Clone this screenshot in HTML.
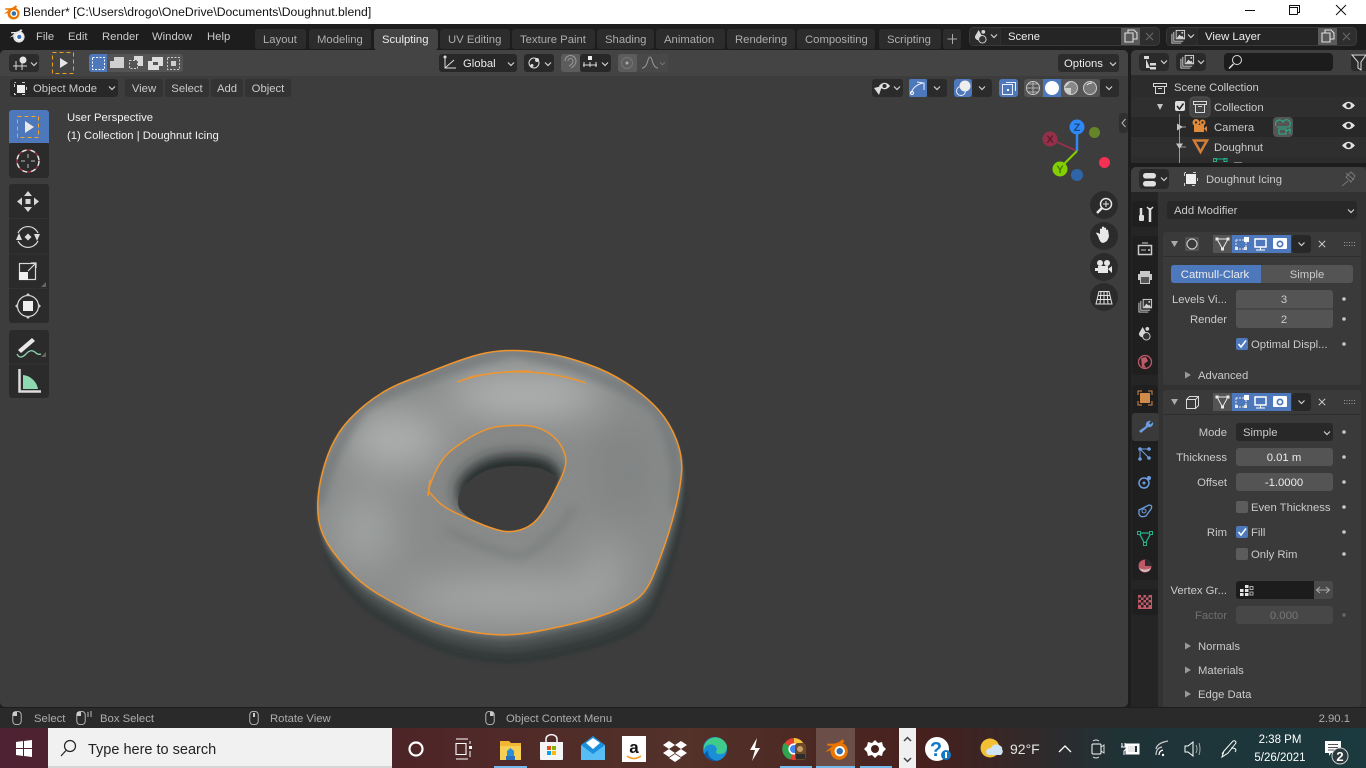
<!DOCTYPE html>
<html lang="en"><head><meta charset="utf-8"><title>Blender</title>
<style>
html,body{margin:0;padding:0;width:1366px;height:768px;overflow:hidden;background:#3d3d3d}
svg{display:block}
text{font-family:"Liberation Sans",sans-serif;font-size:11.300px;fill:#cacaca}
.w{fill:#ececec}.d{fill:#adadad}.g{fill:#6f6f6f}.r{text-anchor:end}.m{text-anchor:middle}
.s{font-family:"Liberation Sans",sans-serif}
.i{fill:none;stroke:#d8d8d8;stroke-width:1.2}
.f{fill:#d8d8d8}
</style></head><body>
<svg width="1366" height="768" viewBox="0 0 1366 768" xmlns="http://www.w3.org/2000/svg">
<defs>
<symbol id="ch" viewBox="0 0 8 6" overflow="visible"><path d="M1 1.5L4 4.5L7 1.5" fill="none" stroke="#d0d0d0" stroke-width="1.2"/></symbol>
<symbol id="eye" viewBox="0 0 14 10" overflow="visible"><path d="M1 5Q7 -2 13 5Q7 12 1 5Z" fill="#e2e2e2"/><circle cx="7" cy="5" r="2.2" fill="#2b2b2b"/></symbol>
<symbol id="bl" viewBox="0 0 24 24" overflow="visible"><path d="M1 15L8 9H3V7H12L17 3L19 5L12 11Z" fill="currentColor"/><circle cx="14" cy="14" r="8" fill="currentColor"/><circle cx="14.500" cy="14" r="4.800" fill="#fff"/><circle cx="14.500" cy="14" r="3" fill="#2f6fb0"/></symbol>
<symbol id="copy" viewBox="0 0 14 14" overflow="visible"><path d="M1 4H9V13H1ZM4 4V1H10L13 4V10H9" fill="none" stroke="#ddd" stroke-width="1.100"/></symbol>
<symbol id="x" viewBox="0 0 10 10" overflow="visible"><path d="M1 1L9 9M9 1L1 9" stroke="#d2d2d2" stroke-width="1.200" fill="none"/></symbol>
<symbol id="scene" viewBox="0 0 16 16" overflow="visible"><path d="M6 1L10 8A4 4 0 0 1 2 8Z" fill="#d6d6d6"/><circle cx="11" cy="3" r="2" fill="#d6d6d6"/><circle cx="10" cy="11" r="4" fill="#333" stroke="#d6d6d6"/></symbol>
<symbol id="layers" viewBox="0 0 16 16" overflow="visible"><path d="M1 5V15H11M3 3V13H13" fill="none" stroke="#d6d6d6"/><rect x="5.500" y="1.500" width="9" height="9" fill="#333" stroke="#d6d6d6"/><path d="M6 10L9 6L11 8L12 7L14 10Z" fill="#d6d6d6"/><circle cx="12" cy="4" r="1" fill="#d6d6d6"/></symbol>
<symbol id="verts" viewBox="0 0 78 18" overflow="visible"><rect width="19" height="18" fill="#545454"/><rect x="19" width="59" height="18" fill="#4d78bb"/>
<path d="M4 4H15L9.500 14Z" fill="none" stroke="#e8e8e8"/><g fill="#e8e8e8"><rect x="2.500" y="2.500" width="3" height="3"/><rect x="13.500" y="2.500" width="3" height="3"/><rect x="8" y="12.500" width="3" height="3"/></g>
<rect x="23" y="5" width="10" height="9" fill="none" stroke="#e8e8e8" stroke-dasharray="2 1"/><rect x="31" y="2" width="5" height="5" fill="#fff"/><rect x="22" y="12" width="3" height="3" fill="#e8e8e8"/><rect x="31" y="12" width="3" height="3" fill="#e8e8e8"/>
<rect x="42" y="4" width="11" height="8" fill="none" stroke="#fff" stroke-width="1.500"/><path d="M47.500 12V15M43 15H52" stroke="#fff"/>
<rect x="60" y="3" width="14" height="11" rx="1" fill="#fff"/><circle cx="67" cy="9" r="3.500" fill="#4d78bb"/><circle cx="67" cy="9" r="1.800" fill="#fff"/></symbol>
<symbol id="mouse" viewBox="0 0 10 15" overflow="visible"><rect x=".5" y=".5" width="9" height="14" rx="3.500" fill="none" stroke="#bdbdbd"/></symbol>
<path id="o" d="M318.5 493.5Q320 480 325 463.5Q330 447 338.5 433.5Q347 420 365 405Q383 390 405 381.5Q427 373 443.5 366.5Q460 360 473.5 356Q487 352 500 351Q513 350 526.5 351Q540 352 553.5 354.5Q567 357 588.5 364.5Q610 372 628.5 384.5Q647 397 658.5 410Q670 423 676.5 440Q683 457 681.5 473.5Q680 490 675 510Q670 530 663.5 548.5Q657 567 652 578.5Q647 590 640 596.5Q633 603 616.5 610Q600 617 580 622Q560 627 536.5 631.5Q513 636 493 634.5Q473 633 453 628Q433 623 413 613Q393 603 376.5 593Q360 583 346.5 568Q333 553 326.5 541.5Q320 530 318.5 518.5Q317 507 318.5 493.5Z"/>
<path id="h" d="M432.5 478.5Q437 467 443.5 458.5Q450 450 467.5 439Q485 428 499 426.5Q513 425 525 425.5Q537 426 547 432Q557 438 561.5 446.5Q566 455 566 461Q566 467 561.5 477Q557 487 550 500Q543 513 536.5 520Q530 527 520 530Q510 533 500 530.5Q490 528 478.5 523Q467 518 455 512.5Q443 507 436.5 500Q430 493 429 491.5Q428 490 432.5 478.5Z"/>
<path id="t" d="M458 503Q458 490 467 483Q477 474 487 470Q500 466 513 466Q527 466 540 468Q550 472 558 478L550 500Q543 513 536.500 520Q530 527 520 530Q510 533 500 530.500Q490 528 478.500 523Q468 518 462 512Q458 508 458 503Z"/>
<clipPath id="top"><use href="#o"/></clipPath>
<clipPath id="hole"><use href="#h"/></clipPath>
<filter id="b1" x="-5%" y="-5%" width="110%" height="110%"><feGaussianBlur stdDeviation="1.500"/></filter>
<filter id="b5" filterUnits="userSpaceOnUse" x="260" y="300" width="480" height="400"><feGaussianBlur stdDeviation="5"/></filter>
<filter id="b7" filterUnits="userSpaceOnUse" x="380" y="380" width="240" height="200"><feGaussianBlur stdDeviation="8"/></filter>
<filter id="b18" filterUnits="userSpaceOnUse" x="220" y="260" width="560" height="480"><feGaussianBlur stdDeviation="20"/></filter>
<linearGradient id="tb" x1="0" y1="0" x2="1366" y2="0" gradientUnits="userSpaceOnUse"><stop offset="0" stop-color="#4e2232"/><stop offset=".3" stop-color="#4e2527"/><stop offset=".5" stop-color="#53322a"/><stop offset=".68" stop-color="#46201d"/><stop offset=".82" stop-color="#1f3236"/><stop offset="1" stop-color="#1b3a3f"/></linearGradient>
</defs>

<!-- title bar -->
<rect width="1366" height="24" fill="#fff"/>
<use href="#bl" x="3" y="3" width="18" height="18" color="#ea7600"/>
<text class="s" x="23" y="16" style="font-size:12.200px;fill:#111">Blender* [C:\Users\drogo\OneDrive\Documents\Doughnut.blend]</text>
<path d="M1245 10.500H1255" stroke="#111"/><path d="M1290.500 7.500H1298.500V14.500M1290.500 7.500V5.500H1300.500V12.500H1298.500M1290.500 7.500V14.500H1298.500" fill="none" stroke="#111" transform="translate(-1 0)"/><path d="M1336 5L1346 15M1346 5L1336 15" stroke="#111" fill="none"/>

<!-- top bar -->
<rect y="24" width="1366" height="684" fill="#1d1d1d"/>
<use href="#bl" x="9" y="27" width="17" height="17" color="#e6e6e6"/>
<text x="36" y="40" >File</text><text x="68" y="40">Edit</text><text x="102" y="40">Render</text><text x="152" y="40">Window</text><text x="207" y="40">Help</text>
<g fill="#2c2c2c"><rect x="255" y="29" width="51" height="20" rx="3"/><rect x="309" y="29" width="62" height="20" rx="3"/><rect x="440" y="29" width="70" height="20" rx="3"/><rect x="512" y="29" width="83" height="20" rx="3"/><rect x="597" y="29" width="57" height="20" rx="3"/><rect x="656" y="29" width="69" height="20" rx="3"/><rect x="727" y="29" width="68" height="20" rx="3"/><rect x="797" y="29" width="78" height="20" rx="3"/><rect x="879" y="29" width="62" height="20" rx="3"/><rect x="943" y="29" width="18" height="20" rx="3"/></g>
<rect x="374" y="29" width="64" height="21" rx="3" fill="#444"/>
<text class="d" x="263" y="43">Layout</text><text class="d" x="317" y="43">Modeling</text><text class="w" x="382" y="43">Sculpting</text><text class="d" x="448" y="43">UV Editing</text><text class="d" x="520" y="43">Texture Paint</text><text class="d" x="605" y="43">Shading</text><text class="d" x="664" y="43">Animation</text><text class="d" x="735" y="43">Rendering</text><text class="d" x="805" y="43">Compositing</text><text class="d" x="887" y="43">Scripting</text>
<path d="M947.500 39H957M952.500 34V44" stroke="#aaa"/>

<!-- scene/view layer -->
<rect x="969.500" y="27.500" width="190" height="18" rx="4" fill="#2e2e2e" stroke="#3a3a3a"/><rect x="970" y="28" width="30" height="17" rx="3" fill="#2a2a2a"/><rect x="1001" y="28" width="120" height="17" fill="#252525"/><rect x="1121" y="28" width="19" height="17" fill="#5a5a5a"/>
<use href="#scene" x="973" y="29" width="15" height="15"/><use href="#ch" x="990" y="33" width="8" height="6"/>
<text class="w" x="1008" y="40">Scene</text><use href="#copy" x="1124" y="29" width="14" height="14"/><use href="#x" x="1145" y="32" width="9" height="9" opacity=".35"/>
<rect x="1166.500" y="27.500" width="190" height="18" rx="4" fill="#2e2e2e" stroke="#3a3a3a"/><rect x="1167" y="28" width="30" height="17" rx="3" fill="#2a2a2a"/><rect x="1198" y="28" width="120" height="17" fill="#252525"/><rect x="1318" y="28" width="19" height="17" fill="#5a5a5a"/>
<use href="#layers" x="1171" y="29" width="15" height="15"/><use href="#ch" x="1187" y="33" width="8" height="6"/>
<text class="w" x="1205" y="40">View Layer</text><use href="#copy" x="1321" y="29" width="14" height="14"/><use href="#x" x="1342" y="32" width="9" height="9" opacity=".35"/>

<!-- 3D viewport -->
<rect x="0" y="50" width="1128" height="657" rx="5" fill="#3d3d3d"/>
<path d="M0 76V55a5 5 0 0 1 5-5H1123a5 5 0 0 1 5 5V76Z" fill="#444"/>

<!-- row 1 -->
<rect x="9" y="54" width="30" height="18" rx="3" fill="#2c2c2c"/><path d="M13 66H27M16 61V70M22 61V70" stroke="#d8d8d8" fill="none"/><circle cx="23" cy="60" r="3.500" fill="#e4e4e4"/><use href="#ch" x="30" y="61" width="8" height="6"/>
<rect x="52.500" y="52.500" width="21" height="21" fill="none" stroke="#f0a020" stroke-dasharray="4 3"/><path d="M60 58L68 63L60 68Z" fill="#e6e6e6"/>
<rect x="89" y="54" width="94" height="18" rx="3" fill="#545454"/><path d="M107 54H92a3 3 0 0 0-3 3V69a3 3 0 0 0 3 3H107Z" fill="#4d78bb"/>
<rect x="92.500" y="57.500" width="12" height="12" fill="none" stroke="#fff" stroke-dasharray="2 1.500"/>
<path d="M110 61H114V57H124V68H110Z" fill="#d0d0d0"/>
<rect x="129.500" y="60.500" width="8" height="8" fill="none" stroke="#d0d0d0" stroke-dasharray="2 1.500"/><path d="M134 56H143V66H138V60H134Z" fill="#d8d8d8"/>
<path d="M148 61H152V57H163V66H159V70H148ZM153 62V65H158V62Z" fill="#ddd" fill-rule="evenodd"/>
<rect x="167.500" y="57.500" width="12" height="12" fill="none" stroke="#ccc" stroke-dasharray="2 1.500"/><rect x="171" y="61" width="5" height="5" fill="#ccc"/>

<rect x="439" y="54" width="78" height="18" rx="3" fill="#282828"/><path d="M445 57V68H456M445 68L454 60" stroke="#ddd" fill="none"/><circle cx="445" cy="57" r="1.500" fill="#ddd"/>
<text class="w" x="463" y="67">Global</text><use href="#ch" x="507" y="61" width="8" height="6"/>
<rect x="524" y="54" width="30" height="18" rx="3" fill="#282828"/><circle cx="534" cy="63" r="5" fill="none" stroke="#ddd"/><circle cx="537" cy="60" r="2" fill="#ddd"/><circle cx="532" cy="65.500" r="1.500" fill="#ddd"/><use href="#ch" x="544" y="61" width="8" height="6"/>
<rect x="561" y="54" width="20" height="18" rx="3" fill="#5c5c5c"/><path d="M565 61A5.500 5.500 0 0 1 576 61Q576 65 571 68M568 61A2.500 2.500 0 0 1 573 61Q573 64 569 66" fill="none" stroke="#999"/>
<rect x="580" y="54" width="31" height="18" rx="3" fill="#282828"/><path d="M583 65H597M584 62V67M590 62V67M596 62V67" stroke="#ddd" fill="none"/><rect x="588" y="56" width="4" height="4" fill="#eee"/><use href="#ch" x="601" y="61" width="8" height="6"/>
<rect x="618" y="54" width="20" height="18" rx="3" fill="#5c5c5c"/><circle cx="627" cy="63" r="5.500" fill="none" stroke="#777"/><circle cx="627" cy="63" r="1.500" fill="#aaa"/>
<rect x="637" y="54" width="31" height="18" rx="3" fill="#484848"/><path d="M642 68Q646 68 648 60Q649 57 650 57Q651 57 652 60Q654 68 658 68" fill="none" stroke="#999"/><use href="#ch" x="659" y="61" width="7" height="5" opacity=".3"/>
<rect x="1058" y="54" width="61" height="18" rx="3" fill="#2c2c2c"/><text class="w" x="1064" y="67">Options</text><use href="#ch" x="1109" y="61" width="8" height="6"/>

<!-- row 2 -->
<rect x="10" y="79" width="108" height="18" rx="3" fill="#282828"/>
<rect x="14.500" y="82.500" width="12" height="12" fill="none" stroke="#ccc" stroke-dasharray="3 6" stroke-dashoffset="1.500"/><rect x="17" y="85" width="8" height="8" fill="#eee"/>
<text x="33" y="92">Object Mode</text><use href="#ch" x="108" y="85" width="8" height="6"/>
<g fill="#333"><rect x="125" y="79" width="38" height="18" rx="3"/><rect x="165" y="79" width="44" height="18" rx="3"/><rect x="211" y="79" width="32" height="18" rx="3"/><rect x="245" y="79" width="46" height="18" rx="3"/></g>
<text class="m" x="144" y="92">View</text><text class="m" x="187" y="92">Select</text><text class="m" x="227" y="92">Add</text><text class="m" x="268" y="92">Object</text>

<rect x="872" y="79" width="31" height="18" rx="3" fill="#2b2b2b"/><use href="#eye" x="878" y="81" width="13" height="10"/><path d="M874 88L882 86L879 95Z" fill="#ddd"/><use href="#ch" x="893" y="85" width="8" height="6"/>
<rect x="927" y="79" width="20" height="18" rx="3" fill="#2b2b2b"/><rect x="909" y="79" width="18" height="18" rx="2" fill="#4d78bb"/><path d="M911 93Q914 85 923 83M917 82L924 83V90" fill="none" stroke="#eef"/><circle cx="912" cy="93" r="1.500" fill="none" stroke="#fff"/><use href="#ch" x="933" y="85" width="8" height="6"/>
<rect x="972" y="79" width="20" height="18" rx="3" fill="#2b2b2b"/><rect x="954" y="79" width="18" height="18" rx="3" fill="#4d78bb"/><circle cx="965" cy="86" r="5.500" fill="#eee"/><circle cx="961" cy="91" r="4.500" fill="none" stroke="#eee"/><use href="#ch" x="978" y="85" width="8" height="6"/>
<rect x="999" y="79" width="19" height="18" rx="3" fill="#4d78bb"/><rect x="1002.500" y="84.500" width="10" height="10" fill="none" stroke="#eef"/><path d="M1006 82.500H1015.500V91" fill="none" stroke="#eef"/><rect x="1007" y="89" width="2" height="2" fill="#fff"/>
<rect x="1024" y="79" width="76" height="18" rx="3" fill="#545454"/><rect x="1043" y="79" width="18" height="18" fill="#4d78bb"/><rect x="1100" y="79" width="19" height="18" rx="3" fill="#2b2b2b"/>
<circle cx="1033" cy="88" r="6.500" fill="none" stroke="#c8c8c8"/><path d="M1027 88H1040M1033 81.500V94.500M1028 84H1038M1028 92H1038" stroke="#c8c8c8" fill="none" stroke-width=".8"/>
<circle cx="1052" cy="88" r="7" fill="#fff"/>
<circle cx="1071" cy="88" r="6.500" fill="#888" stroke="#ccc"/><path d="M1071 81.500A6.500 6.500 0 0 0 1071 94.500V88H1064.500Z" fill="#ccc"/>
<circle cx="1090" cy="88" r="6.500" fill="#777" stroke="#ccc"/><path d="M1087 85Q1089 83 1092 83" stroke="#eee" fill="none"/>
<use href="#ch" x="1105" y="85" width="8" height="6"/>

<!-- overlay text -->
<text class="w" x="67" y="121" style="fill:#f0f0f0">User Perspective</text>
<text class="w" x="67" y="139" style="fill:#f0f0f0">(1) Collection | Doughnut Icing</text>

<!-- toolbar -->
<rect x="9" y="143" width="40" height="35" rx="3" fill="#2b2b2b"/><path d="M9 143V113a3 3 0 0 1 3-3H46a3 3 0 0 1 3 3V143Z" fill="#4d78bb"/>
<rect x="17.500" y="116.500" width="21" height="21" fill="none" stroke="#f5a623" stroke-dasharray="4 3"/><path d="M25 121L34 127L25 133Z" fill="#e8e8e8"/>
<circle cx="28" cy="161" r="11" fill="none" stroke="#e6e6e6" stroke-width="1.500" stroke-dasharray="5 4"/><circle cx="28" cy="161" r="11" fill="none" stroke="#a03040" stroke-width="1.500" stroke-dasharray="4 5" stroke-dashoffset="-5"/><path d="M28 154V158M28 164V168M21 161H25M31 161H35" stroke="#bbb"/>
<rect x="9" y="184" width="40" height="139" rx="3" fill="#2b2b2b"/><path d="M9 218.500H49M9 254H49M9 288.500H49" stroke="#333"/>
<g class="f"><path d="M28 191L24 196H32ZM28 212L24 207H32ZM17 201.500L22 197.500V205.500ZM39 201.500L34 197.500V205.500Z"/><rect x="25.500" y="199" width="5" height="5"/></g>
<path d="M18 233A11 11 0 0 1 38 233M38 241A11 11 0 0 1 18 241" class="i"/><path d="M28 233.500L31.500 237L28 240.500L24.500 237Z" fill="#ddd"/><path d="M16 240L19 233L22 240ZM34 234L37 241L40 234Z" fill="#ddd"/>
<rect x="19.500" y="263.500" width="16" height="16" class="i"/><rect x="19" y="272" width="9" height="8" fill="#eee"/><path d="M28 271L36 263M31 263H36V268" class="i"/>
<circle cx="28" cy="306" r="10.500" class="i"/><rect x="23" y="301" width="10" height="10" fill="#eee"/><path d="M28 293L25 296H31ZM28 319L25 316H31ZM15 306L18 303V309ZM41 306L38 303V309Z" fill="#ccc"/>
<rect x="9" y="330" width="40" height="68" rx="3" fill="#2b2b2b"/><path d="M9 364H49" stroke="#333"/>
<path d="M32 338L18 350L21 353L35 341Z" fill="#e8e8e8"/><path d="M17 354Q20 360 26 354Q31 348 36 353Q38 355 41 354" fill="none" stroke="#8fd9b0" stroke-width="1.300"/>
<path d="M19.500 369V391.500H41" fill="none" stroke="#ddd" stroke-width="2.500"/><path d="M23 375A17 17 0 0 1 38 389H23Z" fill="#8fd9b0"/>
<path d="M46 352V357H41ZM46 282V287H41Z" fill="#666"/>

<!-- gizmo -->
<path d="M1077 151L1050 139" stroke="#94304a" stroke-width="2"/><path d="M1077 151V127" stroke="#2f88f5" stroke-width="2.500"/><path d="M1077 151L1059 169" stroke="#82d000" stroke-width="2"/>
<circle cx="1094.500" cy="132.500" r="5.500" fill="#658528"/><circle cx="1104.500" cy="162.500" r="5.500" fill="#f53052"/><circle cx="1077" cy="175" r="6" fill="#2e65a8"/>
<circle cx="1050" cy="139" r="7.500" fill="#94304a"/><circle cx="1077" cy="127" r="7.500" fill="#2f88f5"/><circle cx="1060" cy="169" r="7.500" fill="#82d000"/>
<text class="m" x="1050" y="143" style="font-size:11px;font-weight:bold;fill:#5a1e2c">X</text><text class="m" x="1077" y="131" style="font-size:11px;font-weight:bold;fill:#174a88">Z</text><text class="m" x="1060" y="173" style="font-size:11px;font-weight:bold;fill:#4a7a00">Y</text>
<!-- nav -->
<g fill="#2b2b2b"><circle cx="1104" cy="205" r="14"/><circle cx="1104" cy="236" r="14"/><circle cx="1104" cy="267" r="14"/><circle cx="1104" cy="297" r="14"/></g>
<circle cx="1106" cy="204" r="5.500" fill="none" stroke="#e6e6e6" stroke-width="1.500"/><path d="M1102 208L1097 213" stroke="#e6e6e6" stroke-width="2.500"/><path d="M1103 204H1109M1106 201V207" stroke="#e6e6e6"/>
<path d="M1098 236L1096 233Q1097 232 1100 234V229Q1101 228 1102 229V233V227Q1103 226 1104 227V233V228Q1105 227 1106 228V234V230Q1107 229 1108 230L1109 236Q1108 242 1103 243Q1100 243 1098 236Z" fill="#e8e8e8"/>
<circle cx="1100" cy="263" r="3" fill="#e6e6e6"/><circle cx="1107" cy="263" r="3" fill="#e6e6e6"/><rect x="1098" y="266" width="10" height="7" fill="#e6e6e6"/><path d="M1108 269L1112 266V273Z" fill="#e6e6e6"/><path d="M1095 268H1098V271H1095Z" fill="#e6e6e6"/>
<path d="M1099 291.500H1109L1112 304H1096ZM1104 291.500V304M1098 295.500H1110M1097 299.500H1111M1101 291.500L1100 304M1107 291.500L1108 304" fill="none" stroke="#e2e2e2"/>
<rect x="1119" y="113" width="9" height="20" rx="3" fill="#2f2f2f"/><path d="M1125.500 119L1122 123L1125.500 127" fill="none" stroke="#bbb"/>

<!-- donut -->
<g filter="url(#b1)">
<use href="#o" transform="translate(5 29)" fill="#323737"/>
<use href="#o" transform="translate(4 24)" fill="#363b3b"/>
<use href="#o" transform="translate(3 18)" fill="#3f4444"/>
<use href="#o" transform="translate(2 12)" fill="#4c5151"/>
<use href="#o" transform="translate(1 6)" fill="#5c6161"/>
<use href="#o" transform="translate(0 2)" fill="#6d7272"/>
</g>
<g clip-path="url(#top)">
<rect x="310" y="340" width="380" height="300" fill="#898b8b"/>
<g filter="url(#b18)">
<ellipse cx="525" cy="395" rx="80" ry="20" fill="#b8baba"/>
<ellipse cx="395" cy="440" rx="50" ry="30" fill="#aeb0b0"/>
<ellipse cx="365" cy="530" rx="30" ry="40" fill="#a0a3a3"/>
<ellipse cx="510" cy="598" rx="110" ry="16" fill="#aeb0b0"/>
<ellipse cx="605" cy="565" rx="22" ry="25" fill="#a0a2a2"/>
<ellipse cx="625" cy="470" rx="30" ry="50" fill="#828484"/>
</g>
<g filter="url(#b5)" fill="none">
<path d="M318 505Q330 447 365 405Q427 373 513 350Q610 372 658 410Q683 457 675 510" stroke="#707373" stroke-width="8"/>
<path d="M445 528Q490 552 520 556Q550 545 575 505" stroke="#797c7c" stroke-width="6"/>
</g>
</g>
<g clip-path="url(#hole)"><rect x="420" y="420" width="155" height="120" fill="#868888"/><use href="#t" transform="translate(0 -10)" fill="#1f2323" filter="url(#b7)"/><use href="#t" transform="translate(3 -4)" fill="#2c3030" filter="url(#b5)"/></g>
<use href="#t" fill="#3d3d3d"/>
<g fill="none" stroke="#f0952d" stroke-width="1.500" stroke-linejoin="round">
<use href="#o"/><use href="#h"/>
<path d="M428 496L430 480M457 382Q490 370 530 372Q560 374 586 383M470 377Q500 371 530 371"/>
</g>

<!-- outliner -->
<path d="M1131 163V55a5 5 0 0 1 5-5H1366V163Z" fill="#2c2c2c"/>
<path d="M1131 75V55a5 5 0 0 1 5-5H1366V75Z" fill="#3f3f3f"/>
<rect x="1139" y="53" width="30" height="18" rx="4" fill="#2a2a2a"/><path d="M1144 56H1149V59H1144ZM1146 59V68H1150M1150 63H1156V65.500H1150ZM1150 67H1156V69.500H1150Z" fill="#d8d8d8"/><use href="#ch" x="1160" y="59" width="8" height="6"/>
<rect x="1176" y="53" width="30" height="18" rx="4" fill="#2a2a2a"/><use href="#layers" x="1180" y="54" width="15" height="15"/><use href="#ch" x="1197" y="59" width="8" height="6"/>
<rect x="1224" y="53" width="109" height="18" rx="4" fill="#1c1c1c"/><circle cx="1237" cy="60" r="4.500" fill="none" stroke="#ddd"/><path d="M1233.500 64L1229 68.500" stroke="#ddd" stroke-width="1.500"/>
<path d="M1351 57a3 3 0 0 1 3-3H1366V71H1354a3 3 0 0 1-3-3Z" fill="#2a2a2a"/><path d="M1352 55H1366L1361 62V70L1358 68V62Z" fill="none" stroke="#ddd"/>
<rect x="1131" y="97" width="235" height="20" fill="#2f2f2f"/><rect x="1131" y="117" width="235" height="20" fill="#282828"/><rect x="1131" y="137" width="235" height="20" fill="#2f2f2f"/>
<path d="M1153.500 83.500H1166.500V86.500H1153.500ZM1155.500 86.500V93.500H1164.500V86.500M1158 88.500H1162" fill="none" stroke="#d8d8d8"/>
<text x="1174" y="91">Scene Collection</text>
<path d="M1157 104H1163L1160 110Z" fill="#c4c4c4"/><path d="M1179.500 114V163M1180 127H1186M1180 147H1186" stroke="#9a9a9a" fill="none"/>
<rect x="1175" y="101" width="10" height="10" rx="2" fill="#ddd"/><path d="M1177 106L1179.500 109L1183.500 103.500" fill="none" stroke="#222" stroke-width="1.500"/>
<rect x="1190" y="97" width="20" height="20" rx="4" fill="#444" stroke="#555"/><path d="M1193.500 101.500H1206.500V104.500H1193.500ZM1195.500 104.500V112.500H1204.500V104.500M1198 106.500H1202" fill="none" stroke="#d8d8d8"/>
<text x="1214" y="111">Collection</text><use href="#eye" x="1341" y="100" width="15" height="11"/>
<path d="M1177 123.500L1183 127L1177 130.500Z" fill="#c4c4c4"/>
<circle cx="1196" cy="122.500" r="3.500" fill="#e08a3c"/><circle cx="1202.500" cy="122.500" r="3" fill="#e08a3c"/><rect x="1194" y="125" width="10" height="7" fill="#e08a3c"/><path d="M1204 128.500L1207 126V132Z" fill="#e08a3c"/><circle cx="1196" cy="122.500" r="1.200" fill="#333"/><circle cx="1202.500" cy="122.500" r="1.200" fill="#333"/>
<text x="1214" y="131">Camera</text>
<rect x="1273" y="117" width="20" height="20" rx="4" fill="#555"/><path d="M1276 126A4 4 0 0 1 1283 122A3 3 0 0 1 1290 125Q1290 127 1288 127H1277M1279 129H1286V134H1279ZM1286 131L1290 129V134" fill="none" stroke="#25b08c" stroke-width="1.100"/>
<use href="#eye" x="1341" y="120" width="15" height="11"/>
<path d="M1176 143.500H1183L1179.500 149Z" fill="#c4c4c4"/><path d="M1194 140.500H1207L1200.500 152Z" fill="none" stroke="#d07f3a" stroke-width="2.500"/>
<text x="1214" y="151">Doughnut</text><use href="#eye" x="1341" y="140" width="15" height="11"/>
<path d="M1215 159H1226" stroke="#25b08c"/><rect x="1213.500" y="158.500" width="3" height="3" fill="none" stroke="#25b08c"/><rect x="1224" y="158.500" width="3" height="3" fill="none" stroke="#25b08c"/><path d="M1234 163H1242" stroke="#ccc"/>
<rect x="1131" y="163" width="235" height="4" fill="#1d1d1d"/>

<!-- properties -->
<path d="M1131 707V172a5 5 0 0 1 5-5H1366V707Z" fill="#323232"/>
<path d="M1131 192V172a5 5 0 0 1 5-5H1361a5 5 0 0 1 5 5V192Z" fill="#3f3f3f"/>
<rect x="1139" y="169" width="30" height="20" rx="4" fill="#2a2a2a"/><rect x="1143" y="173" width="13" height="5.500" rx="2.700" fill="#e0e0e0"/><rect x="1143" y="181" width="13" height="5.500" rx="2.700" fill="#e0e0e0"/><use href="#ch" x="1160" y="176" width="8" height="6"/>
<rect x="1184.500" y="172.500" width="13" height="13" fill="none" stroke="#ccc" stroke-dasharray="3 7" stroke-dashoffset="1.500"/><rect x="1186" y="174" width="10" height="10" fill="#eee"/>
<text x="1206" y="183">Doughnut Icing</text>
<path d="M1346 173L1354 180M1348 181L1342 186M1351 172L1355 176L1351 182L1346 177Z" fill="none" stroke="#777"/>

<!-- tabs column -->
<rect x="1131" y="192" width="27" height="515" fill="#252525"/>
<g fill="#1f1f1f"><rect x="1132" y="201" width="26" height="26" rx="3"/><rect x="1132" y="236" width="26" height="139" rx="3"/><rect x="1132" y="385" width="26" height="195" rx="3"/><rect x="1132" y="589" width="26" height="26" rx="3"/></g>
<rect x="1132" y="413" width="27" height="28" rx="3" fill="#3a3a3a"/>
<!-- tab icons -->
<path d="M1141 208V215M1150 208V222" stroke="#ddd" stroke-width="2.500"/><path d="M1147 207L1150 210L1153 207" fill="none" stroke="#ddd" stroke-width="1.500"/><rect x="1139" y="215" width="5" height="6" rx="1" fill="#ddd"/>
<rect x="1138.500" y="245.500" width="13" height="9" fill="none" stroke="#ccc" stroke-width="1.500"/><path d="M1142 243H1148M1141 250H1146" stroke="#ccc"/><circle cx="1149" cy="250" r="1" fill="#ccc"/>
<path d="M1140 271H1150V274H1152V280H1150V284H1140V280H1138V274H1140Z" fill="#c8c8c8"/><rect x="1141" y="277" width="8" height="6" fill="#555"/>
<use href="#layers" x="1138" y="298" width="15" height="15"/>
<use href="#scene" x="1137" y="326" width="15" height="15"/>
<circle cx="1145" cy="362" r="6.500" fill="none" stroke="#c05a68" stroke-width="1.300"/><path d="M1141 358L1146 357L1148 361L1144 364L1146 368L1142 367Z" fill="#c05a68"/>
<rect x="1140" y="393" width="10" height="10" fill="#d08a4a"/><path d="M1138 395V391H1142M1148 391H1152V395M1152 401V405H1148M1142 405H1138V401" fill="none" stroke="#d08a4a"/>
<path d="M1151 421a4 4 0 0 0-5 5L1139 431L1141 433L1148 427a4 4 0 0 0 5-5L1150.500 424.500L1149 423Z" fill="#6b9de0"/>
<path d="M1140 449L1140 459M1140 449L1149 458M1140 449H1149" stroke="#6b9de0" fill="none"/><circle cx="1140" cy="449" r="1.800" fill="#6b9de0"/><circle cx="1140" cy="459" r="1.800" fill="#6b9de0"/><circle cx="1149" cy="458" r="1.800" fill="#6b9de0"/><circle cx="1149" cy="449" r="1.800" fill="#6b9de0"/>
<circle cx="1144" cy="483" r="5" fill="none" stroke="#6b9de0" stroke-width="1.500"/><circle cx="1144" cy="483" r="1.500" fill="#6b9de0"/><circle cx="1149" cy="478" r="2" fill="#6b9de0"/>
<path d="M1139 510L1149 505Q1153 505 1151 509L1146 516Q1140 518 1139 514Z" fill="none" stroke="#6b9de0" stroke-width="1.300"/><circle cx="1144" cy="511" r="2" fill="none" stroke="#6b9de0"/>
<path d="M1139 533H1151L1145 544Z" fill="none" stroke="#25b08c" stroke-width="1.300"/><g fill="#1f1f1f" stroke="#25b08c"><rect x="1137.500" y="531.500" width="3" height="3"/><rect x="1149.500" y="531.500" width="3" height="3"/><rect x="1143.500" y="542.500" width="3" height="3"/></g>
<circle cx="1145" cy="566" r="6.500" fill="#c05a68"/><path d="M1145 559.500A6.500 6.500 0 0 1 1151.500 566H1145Z" fill="#2b2b2b"/><path d="M1139 568Q1145 571 1151 568A6.500 6.500 0 0 1 1139 568Z" fill="#ddd" opacity=".7"/>
<rect x="1138" y="595" width="14" height="14" fill="#c05a68"/><path d="M1141 595H1143.500V597.500H1141ZM1146 595H1148.500V597.500H1146ZM1138.500 597.500H1141V600H1138.500ZM1143.500 597.500H1146V600H1143.500ZM1148.500 597.500H1151V600H1148.500ZM1141 600H1143.500V602.500H1141ZM1146 600H1148.500V602.500H1146ZM1138.500 602.500H1141V605H1138.500ZM1143.500 602.500H1146V605H1143.500ZM1148.500 602.500H1151V605H1148.500ZM1141 605H1143.500V607.500H1141ZM1146 605H1148.500V607.500H1146Z" fill="#222"/>

<!-- Add modifier -->
<rect x="1167" y="201" width="190" height="18" rx="3" fill="#282828"/><text x="1174" y="214">Add Modifier</text><use href="#ch" x="1347" y="208" width="8" height="6"/>

<!-- Panel 1 -->
<rect x="1163" y="232" width="198" height="153" rx="3" fill="#3a3a3a"/><path d="M1163 256.500H1361" stroke="#2e2e2e"/>
<path d="M1171 241H1178L1174.500 247Z" fill="#aaa"/>
<rect x="1186" y="238" width="12" height="12" fill="none" stroke="#666"/><circle cx="1192" cy="244" r="5" fill="none" stroke="#d8d8d8"/>
<use href="#verts" x="1213" y="235" width="78" height="18"/>
<rect x="1292" y="235" width="19" height="18" rx="3" fill="#282828"/><use href="#ch" x="1297" y="241" width="9" height="6"/><use href="#x" x="1318" y="240" width="8" height="8"/>
<path d="M1344 242.500H1356M1344 245.500H1356" stroke="#999" stroke-dasharray="1 1.500"/>
<rect x="1171" y="265" width="182" height="18" rx="3" fill="#545454"/><path d="M1261 265H1174a3 3 0 0 0-3 3V280a3 3 0 0 0 3 3H1261Z" fill="#4d78bb"/>
<text class="w m" x="1215" y="278">Catmull-Clark</text><text class="m" x="1307" y="278">Simple</text>
<text class="r" x="1227" y="303">Levels Vi...</text><text class="r" x="1227" y="323">Render</text>
<rect x="1236" y="290" width="97" height="38" rx="3" fill="#545454"/><path d="M1236 309H1333" stroke="#3a3a3a"/>
<text class="m" x="1284" y="303">3</text><text class="m" x="1284" y="323">2</text>
<rect x="1236" y="338" width="12" height="12" rx="2" fill="#4d78bb"/><path d="M1238.500 344L1241 347L1246 340.500" fill="none" stroke="#fff" stroke-width="1.500"/><text x="1251" y="348">Optimal Displ...</text>
<g fill="#c8c8c8"><circle cx="1344" cy="299" r="1.800"/><circle cx="1344" cy="319" r="1.800"/><circle cx="1344" cy="344" r="1.800"/></g>
<path d="M1185 371.500L1191 375L1185 378.500Z" fill="#999"/><text x="1198" y="379">Advanced</text>

<!-- Panel 2 -->
<path d="M1163 707V393a3 3 0 0 1 3-3H1358a3 3 0 0 1 3 3V703a4 4 0 0 1-4 4Z" fill="#3a3a3a"/><path d="M1163 414.500H1361" stroke="#2e2e2e"/>
<path d="M1171 399H1178L1174.500 405Z" fill="#aaa"/>
<path d="M1186.500 399.500H1195.500V408.500H1186.500ZM1186.500 399.500L1189.500 396.500H1198.500V405.500L1195.500 408.500M1195.500 399.500L1198.500 396.500" fill="none" stroke="#d8d8d8"/>
<use href="#verts" x="1213" y="393" width="78" height="18"/>
<rect x="1292" y="393" width="19" height="18" rx="3" fill="#282828"/><use href="#ch" x="1297" y="399" width="9" height="6"/><use href="#x" x="1318" y="398" width="8" height="8"/>
<path d="M1344 400.500H1356M1344 403.500H1356" stroke="#999" stroke-dasharray="1 1.500"/>
<text class="r" x="1227" y="436">Mode</text><rect x="1236" y="423" width="97" height="18" rx="3" fill="#282828"/><text x="1243" y="436">Simple</text><use href="#ch" x="1323" y="430" width="8" height="6"/>
<text class="r" x="1227" y="461">Thickness</text><rect x="1236" y="448" width="97" height="18" rx="3" fill="#545454"/><text class="m w" x="1284" y="461">0.01 m</text>
<text class="r" x="1227" y="486">Offset</text><rect x="1236" y="473" width="97" height="18" rx="3" fill="#545454"/><text class="m w" x="1284" y="486">-1.0000</text>
<rect x="1236" y="501" width="12" height="12" rx="2" fill="#5c5c5c"/><text x="1251" y="511">Even Thickness</text>
<text class="r" x="1227" y="536">Rim</text><rect x="1236" y="526" width="12" height="12" rx="2" fill="#4d78bb"/><path d="M1238.500 532L1241 535L1246 528.500" fill="none" stroke="#fff" stroke-width="1.500"/><text x="1251" y="536">Fill</text>
<rect x="1236" y="548" width="12" height="12" rx="2" fill="#5c5c5c"/><text x="1251" y="558">Only Rim</text>
<text class="r" x="1227" y="594">Vertex Gr...</text><rect x="1236" y="581" width="97" height="18" rx="3" fill="#4a4a4a"/><path d="M1314 581H1239a3 3 0 0 0-3 3V596a3 3 0 0 0 3 3H1314Z" fill="#1c1c1c"/>
<g fill="#e4e4e4"><rect x="1245" y="585" width="3.500" height="3"/><rect x="1240" y="589" width="3.500" height="3"/><rect x="1245" y="589" width="3.500" height="3"/><rect x="1240" y="593" width="3.500" height="3"/><rect x="1245" y="593" width="3.500" height="3"/></g><rect x="1250" y="586.500" width="3" height="3" fill="none" stroke="#ccc" stroke-width=".8"/><rect x="1250" y="592" width="3" height="3" fill="none" stroke="#ccc" stroke-width=".8"/>
<path d="M1317 590H1329M1320 587L1316.500 590L1320 593M1326 587L1329.500 590L1326 593" fill="none" stroke="#aaa"/>
<text class="r g" x="1227" y="619">Factor</text><rect x="1236" y="606" width="97" height="18" rx="3" fill="#474747"/><text class="m g" x="1284" y="619" style="fill:#777">0.000</text>
<g fill="#c8c8c8"><circle cx="1344" cy="432" r="1.800"/><circle cx="1344" cy="457" r="1.800"/><circle cx="1344" cy="482" r="1.800"/><circle cx="1344" cy="507" r="1.800"/><circle cx="1344" cy="532" r="1.800"/><circle cx="1344" cy="554" r="1.800"/></g><circle cx="1344" cy="615" r="1.800" fill="#666"/>
<g fill="#999"><path d="M1185 642.500L1191 646L1185 649.500ZM1185 666.500L1191 670L1185 673.500ZM1185 690.500L1191 694L1185 697.500Z"/></g>
<text x="1198" y="650">Normals</text><text x="1198" y="674">Materials</text><text x="1198" y="698">Edge Data</text>

<!-- status bar -->
<rect y="708" width="1366" height="20" fill="#2a2a2a"/>
<use href="#mouse" x="12" y="711" width="10" height="14"/><path d="M13 712H17V716H12.500Z" fill="#ccc"/>
<text class="d" x="34" y="722">Select</text>
<use href="#mouse" x="76" y="711" width="10" height="14"/><path d="M77 712H81V716H76.500Z" fill="#ccc"/><path d="M88 712V717M91 711V717" stroke="#bbb"/>
<text class="d" x="100" y="722">Box Select</text>
<use href="#mouse" x="249" y="711" width="10" height="14"/><rect x="253" y="713" width="2" height="4" fill="#ccc"/>
<text class="d" x="270" y="722">Rotate View</text>
<use href="#mouse" x="485" y="711" width="10" height="14"/><path d="M490 712H493.500V716H490Z" fill="#ccc"/>
<text class="d" x="506" y="722">Object Context Menu</text>
<text class="d r" x="1350" y="722">2.90.1</text>

<!-- taskbar -->
<rect y="728" width="1366" height="40" fill="url(#tb)"/>
<path d="M16 742L23 741V748H16ZM24 741L32 740V748H24ZM16 749H23V756L16 755ZM24 749H32V757L24 756Z" fill="#fff"/>
<rect x="48" y="728" width="344" height="40" fill="#f1f1f1"/><path d="M48 767H392" stroke="#bbb"/>
<circle cx="70" cy="746" r="5.500" fill="none" stroke="#222" stroke-width="1.200"/><path d="M66 750.500L61 756" stroke="#222" stroke-width="1.200"/>
<text class="s" x="88" y="754" style="font-size:14.500px;fill:#222">Type here to search</text>
<circle cx="416" cy="749" r="6.500" fill="none" stroke="#fff" stroke-width="2.200"/>
<path d="M456 739H468M456 759H468M456 743.500H466V754.500H456Z" fill="none" stroke="#fff" stroke-width="1.100"/><rect x="469" y="746" width="3" height="3" fill="#fff"/><path d="M470 741V744M470 751V757" stroke="#fff"/>
<path d="M500 741H509L511 743H521V760H500Z" fill="#f2b632"/><rect x="500" y="746" width="21" height="14" fill="#f7cf55"/><path d="M507 756V751L510.500 748L514 751V756Z" fill="#2b8fd8"/><rect x="506" y="756" width="9" height="4" fill="#2b70b8"/>
<path d="M540 742H563V759a1 1 0 0 1-1 1H541a1 1 0 0 1-1-1Z" fill="#f5f5f5"/><path d="M546 742V739a5 4 0 0 1 11 0V742" fill="none" stroke="#f5f5f5" stroke-width="1.500"/><rect x="547" y="746" width="4" height="4" fill="#e74c25"/><rect x="552" y="746" width="4" height="4" fill="#7fba00"/><rect x="547" y="751" width="4" height="4" fill="#00a4ef"/><rect x="552" y="751" width="4" height="4" fill="#ffb900"/>
<path d="M581 745L593 736L605 745V760H581Z" fill="#1a8fdc"/><path d="M581 745L593 754L605 745L605 760H581Z" fill="#58bdf4"/><path d="M586 743L593 738L600 743L593 749Z" fill="#fff"/>
<rect x="622" y="736" width="24" height="26" fill="#fff"/><text class="s m" x="634" y="753" style="font-size:17px;font-weight:bold;fill:#111">a</text><path d="M627 756Q634 761 641 756" fill="none" stroke="#f49a1a" stroke-width="1.500"/>
<path d="M669 741L675 745L669 749L663 745ZM681 741L687 745L681 749L675 745ZM669 749L675 753L669 757L663 753ZM681 749L687 753L681 757L675 753ZM675 754L681 758L675 762L669 758Z" fill="#fff"/>
<circle cx="715" cy="749" r="12" fill="#1b8ed8"/><path d="M704 746A12 12 0 0 1 727 746Q727 754 720 754Q714 754 717 749Q715 743 708 745Q705 746 704 750Z" fill="#3ecb8c"/><path d="M708 750Q707 759 718 761Q708 762 704 754Z" fill="#0c5aa8"/>
<path d="M757 738L750 750L755 750L752 761L760 748L755 748Z" fill="#fff"/>
<circle cx="794" cy="749" r="11" fill="#e34133"/><path d="M794 749L784 743A11 11 0 0 0 790 759.500Z" fill="#2ea44f"/><path d="M794 738A11 11 0 0 1 805 749H794Z" fill="#f8c23a"/><circle cx="794" cy="749" r="4.800" fill="#4285f4" stroke="#fff" stroke-width="1.600"/><rect x="795" y="743" width="11" height="17" rx="3" fill="#6b4a2a"/><circle cx="800" cy="749" r="3" fill="#c9a06a"/><rect x="796" y="754" width="9" height="5" fill="#2c2c2c"/>
<rect x="816" y="728" width="39" height="40" fill="#6b4e48"/>
<use href="#bl" x="824" y="736" width="26" height="26" color="#ea7600"/>
<path d="M875 740L878 743L882 742L883 746L886 749L883 752L882 756L878 755L875 758L872 755L868 756L867 752L864 749L867 746L868 742L872 743Z" fill="#fff"/><circle cx="875" cy="749" r="4" fill="#46201d"/>
<rect x="899" y="728" width="17" height="40" fill="#f0f0f0"/><path d="M904 741L907.500 737.500L911 741M904 758L907.500 761.500L911 758" fill="none" stroke="#444" stroke-width="1.500"/>
<circle cx="937" cy="749" r="12" fill="#fff"/><text class="s m" x="936" y="756" style="font-size:20px;font-weight:bold;fill:#1479c4">?</text><circle cx="946" cy="755" r="5" fill="#1479c4"/><rect x="945" y="752" width="2" height="6" fill="#fff"/>
<circle cx="990" cy="748" r="9.500" fill="#f3c033"/><path d="M986 756Q983 756 983 752Q984 749 988 749Q990 744 996 746Q1000 748 999 750Q1001 753 998 756Z" fill="#cfe3f2" transform="translate(3 -1)"/>
<text class="s" x="1010" y="754" style="font-size:14px;fill:#e4e4e4">92°F</text>
<path d="M1059 752L1065 746L1071 752" fill="none" stroke="#fff" stroke-width="1.300"/>
<rect x="1092" y="744" width="9" height="10" rx="1" fill="none" stroke="#fff"/><path d="M1101 747L1104 745V753L1101 751M1093 741Q1096 739 1099 741M1093 757Q1096 759 1099 757" fill="none" stroke="#ddd"/>
<rect x="1126" y="744" width="13" height="10" fill="#fff" stroke="#fff"/><rect x="1128" y="746" width="9" height="6" fill="#1f3236"/><rect x="1128" y="746" width="7" height="6" fill="#e8e8e8"/><path d="M1122 743V747M1125 743V747M1121 747H1126V749L1124 751V755" fill="none" stroke="#fff"/>
<path d="M1156 755Q1156 748 1162 747M1156 749Q1157 743 1168 741" fill="none" stroke="#ccc" stroke-width="1.200"/><path d="M1159 755Q1159 751 1163 750" fill="none" stroke="#fff" stroke-width="1.200"/><circle cx="1163" cy="755" r="1.200" fill="#fff"/>
<path d="M1185 746H1188L1193 742V756L1188 752H1185Z" fill="none" stroke="#fff"/><path d="M1196 745Q1198 749 1196 753M1199 743Q1201 749 1199 755" fill="none" stroke="#aaa"/>
<path d="M1222 757L1224 751L1233 741Q1236 740 1236 743L1228 753ZM1231 748Q1238 748 1235 752M1224 751L1222 754" fill="none" stroke="#fff"/>
<text class="s m" x="1280" y="743" style="font-size:11.500px;fill:#fff">2:38 PM</text>
<text class="s m" x="1280" y="761" style="font-size:11.500px;fill:#fff">5/26/2021</text>
<path d="M1325 741H1341V753H1331L1329 756V753H1325Z" fill="#fff"/><path d="M1328 744.500H1338M1328 747.500H1338M1328 750H1335" stroke="#555"/>
<circle cx="1340" cy="756" r="8" fill="#2a3a3d" stroke="#ccc"/><text class="s m" x="1340" y="761" style="font-size:13px;font-weight:bold;fill:#fff">2</text>
<g fill="#76b9ed"><rect x="494" y="766" width="33" height="2"/><rect x="780" y="766" width="32" height="2"/><rect x="816" y="766" width="39" height="2"/><rect x="860" y="766" width="32" height="2"/></g>
</svg>
</body></html>
